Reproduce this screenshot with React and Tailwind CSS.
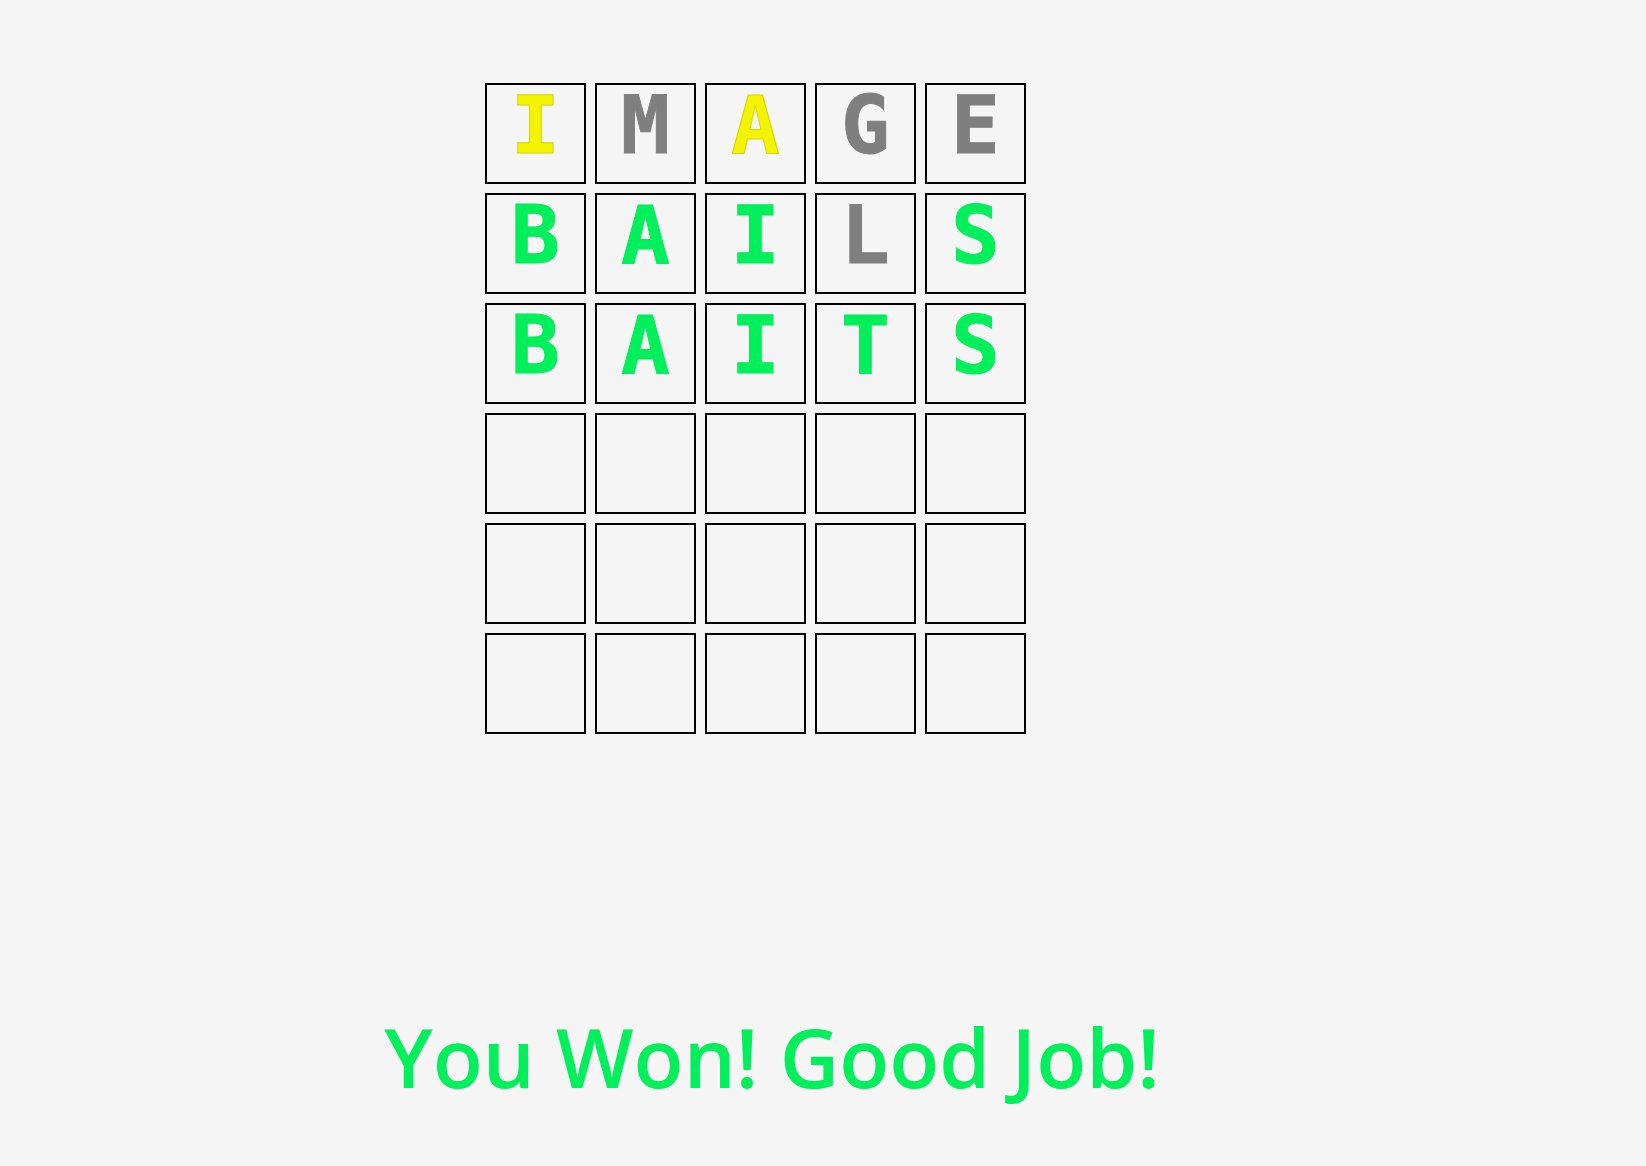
import React from 'react'

const rows = [
  [['I', 'yellow'], ['M', 'gray'], ['A', 'yellow'], ['G', 'gray'], ['E', 'gray']],
  [['B', 'green'], ['A', 'green'], ['I', 'green'], ['L', 'gray'], ['S', 'green']],
  [['B', 'green'], ['A', 'green'], ['I', 'green'], ['T', 'green'], ['S', 'green']],
  [[], [], [], [], []],
  [[], [], [], [], []],
  [[], [], [], [], []],
]

const colorClass = {
  yellow: 'text-[#f4f400] [-webkit-text-stroke:1px_#d6d600]',
  gray: 'text-[#7f7f7f] [-webkit-text-stroke:1px_#7f7f7f]',
  green: 'text-[#00ef5a] [-webkit-text-stroke:1px_#00ef5a]',
}

const Tile = ({ letter, color }) => (
  <div className="w-[101px] h-[101px] border-2 border-black flex justify-center">
    <span
      className={`text-[81px] leading-none font-bold ${color ? colorClass[color] : ''}`}
      style={{ fontFamily: '"DejaVu Sans Mono", monospace' }}
    >
      {letter}
    </span>
  </div>
)

const App = () => {
  return (
    <div className="min-h-[1166px] bg-[#f5f5f5] pt-[83px]">
      <div className="pl-[485px] flex flex-col gap-[9px]">
        {rows.map((row, r) => (
          <div key={r} className="flex gap-[9px]">
            {row.map(([letter, color], c) => (
              <Tile key={c} letter={letter} color={color} />
            ))}
          </div>
        ))}
      </div>
      <p
        className="w-[1544px] mt-[261px] text-center text-[82px] font-semibold text-[#00ef5a]"
        style={{ fontFamily: '"Open Sans", sans-serif' }}
      >
        You Won! Good Job!
      </p>
    </div>
  )
}

export default App
